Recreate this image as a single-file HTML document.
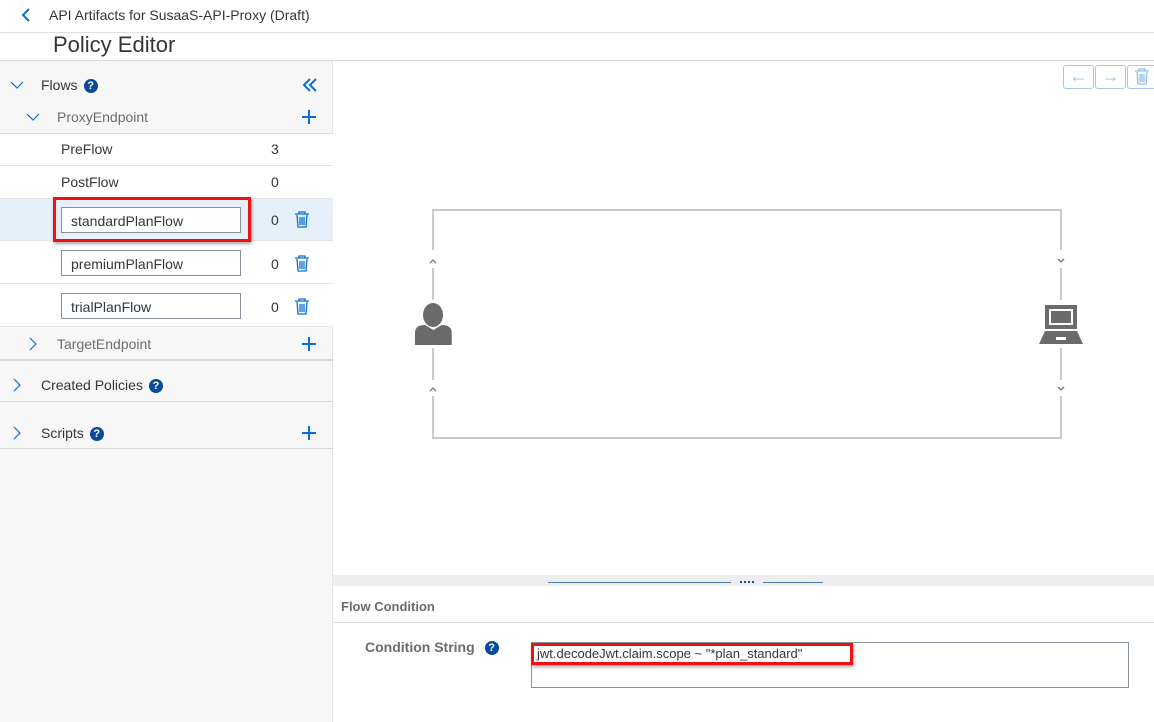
<!DOCTYPE html>
<html><head><meta charset="utf-8"><style>
*{margin:0;padding:0;box-sizing:border-box}
body{width:1154px;height:722px;position:relative;overflow:hidden;background:#fff;font-family:"Liberation Sans",Arial,sans-serif;color:#32363a}
.a{position:absolute}
.t{font-size:14px}
.row{position:absolute;left:0;width:333px;border-bottom:1px solid #e5e5e5}
.inp{position:absolute;left:61px;width:180px;height:26px;border:1px solid #89919a;background:#fff;font-size:14px;padding:5px 9px;color:#32363a}
.q{display:inline-block;width:14px;height:14px;border-radius:50%;background:#0a4a9c;color:#fff;font-size:11px;font-weight:bold;text-align:center;line-height:14px;vertical-align:1px;margin-left:6px}
.plus{position:absolute;left:301px}
</style></head><body>
<div class="a" style="left:0;top:0;width:1154px;height:33px;border-bottom:1px solid #e0e0e0"></div>
<svg class="a" style="left:20px;top:7px" width="12" height="16"><path d="M9 2 L3 8 L9 14" stroke="#0a6ed1" stroke-width="2" fill="none"/></svg>
<div class="a t" style="left:49px;top:7px">API Artifacts for SusaaS-API-Proxy (Draft)</div>
<div class="a" style="left:53px;top:32px;font-size:22px">Policy Editor</div>
<div class="a" style="left:0;top:60px;width:1154px;height:1px;background:#d9d9d9"></div>
<div class="a" style="left:0;top:61px;width:333px;height:661px;background:#f7f7f7;border-right:1px solid #e5e5e5"></div>
<svg width="0" height="0" style="position:absolute"><defs>
<g id="bin"><path d="M1 3 H15 M5 3 V1 H11 V3 M3 4 L4 16 H12 L13 4 M6 6 V14 M8 6 V14 M10 6 V14" stroke="#0a6ed1" stroke-width="1.3" fill="none"/></g>
<g id="pl"><path d="M8 1 V15 M1 8 H15" stroke="#0a6ed1" stroke-width="2" fill="none"/></g>
</defs></svg>
<svg class="a" style="left:10px;top:80px" width="14" height="10"><path d="M1 2 L7 8 L13 2" stroke="#0a6ed1" stroke-width="1.2" fill="none"/></svg>
<div class="a t" style="left:41px;top:77px">Flows<span class="q">?</span></div>
<svg class="a" style="left:302px;top:77px" width="16" height="16"><path d="M8 2 L2 8 L8 14 M14 2 L8 8 L14 14" stroke="#0a6ed1" stroke-width="2" fill="none"/></svg>
<svg class="a" style="left:26px;top:112px" width="14" height="10"><path d="M1 2 L7 8 L13 2" stroke="#0a6ed1" stroke-width="1.2" fill="none"/></svg>
<div class="a t" style="left:57px;top:109px;color:#6a6d70">ProxyEndpoint</div>
<svg class="plus" style="top:109px" width="16" height="16"><use href="#pl"/></svg>
<div class="row" style="top:133px;height:33px;background:#fff;border-top:1px solid #d9d9d9"></div>
<div class="a t" style="left:61px;top:141px">PreFlow</div><div class="a t" style="left:271px;top:141px">3</div>
<div class="row" style="top:166px;height:33px;background:#fff"></div>
<div class="a t" style="left:61px;top:174px">PostFlow</div><div class="a t" style="left:271px;top:174px">0</div>
<div class="row" style="top:199px;height:42px;background:#e5f0fa"></div>
<div class="row" style="top:241px;height:43px;background:#fff"></div>
<div class="row" style="top:284px;height:43px;background:#fff"></div>
<div class="inp" style="top:207px">standardPlanFlow</div>
<div class="a" style="left:53px;top:197px;width:198px;height:45px;border:3px solid #f01010;box-shadow:1px 2px 3px rgba(0,0,0,.35)"></div>
<div class="inp" style="top:250px">premiumPlanFlow</div>
<div class="inp" style="top:293px">trialPlanFlow</div>
<div class="a t" style="left:271px;top:212px">0</div><div class="a t" style="left:271px;top:256px">0</div><div class="a t" style="left:271px;top:299px">0</div>
<svg class="a" style="left:294px;top:211px" width="16" height="17"><use href="#bin"/></svg>
<svg class="a" style="left:294px;top:255px" width="16" height="17"><use href="#bin"/></svg>
<svg class="a" style="left:294px;top:298px" width="16" height="17"><use href="#bin"/></svg>
<svg class="a" style="left:28px;top:337px" width="10" height="14"><path d="M2 1 L8 7 L2 13" stroke="#0a6ed1" stroke-width="1.2" fill="none"/></svg>
<div class="a t" style="left:57px;top:336px;color:#6a6d70">TargetEndpoint</div>
<svg class="plus" style="top:336px" width="16" height="16"><use href="#pl"/></svg>
<div class="a" style="left:0;top:359px;width:333px;height:2px;background:#d9d9d9"></div>
<svg class="a" style="left:12px;top:378px" width="10" height="14"><path d="M2 1 L8 7 L2 13" stroke="#0a6ed1" stroke-width="1.2" fill="none"/></svg>
<div class="a t" style="left:41px;top:377px">Created Policies<span class="q">?</span></div>
<div class="a" style="left:0;top:401px;width:333px;height:1px;background:#d9d9d9"></div>
<svg class="a" style="left:12px;top:426px" width="10" height="14"><path d="M2 1 L8 7 L2 13" stroke="#0a6ed1" stroke-width="1.2" fill="none"/></svg>
<div class="a t" style="left:41px;top:425px">Scripts<span class="q">?</span></div>
<svg class="plus" style="top:425px" width="16" height="16"><use href="#pl"/></svg>
<div class="a" style="left:0;top:448px;width:333px;height:1px;background:#d9d9d9"></div>
<div class="a" style="left:1063px;top:65px;width:31px;height:24px;border:1px solid #a9c5e8;border-radius:3px;color:#9cbde4;font-size:18px;text-align:center;line-height:20px">←</div>
<div class="a" style="left:1095px;top:65px;width:31px;height:24px;border:1px solid #a9c5e8;border-radius:3px;color:#9cbde4;font-size:18px;text-align:center;line-height:20px">→</div>
<div class="a" style="left:1127px;top:65px;width:31px;height:24px;border:1px solid #a9c5e8;border-radius:3px"></div>
<svg class="a" style="left:1134px;top:68px;opacity:.45" width="16" height="17"><use href="#bin"/></svg>
<svg class="a" style="left:400px;top:200px" width="700" height="250">
<g stroke="#aaa" stroke-width="1.2" fill="none">
<path d="M33 50 V10 H661 V50"/><path d="M33 68 V100"/><path d="M661 68 V100"/>
<path d="M33 148 V180"/><path d="M661 148 V180"/>
<path d="M33 196 V238 H661 V196"/>
</g>
<g stroke="#777" stroke-width="1.3" fill="none">
<path d="M30 63 L33 60 L36 63"/><path d="M30 191 L33 188 L36 191"/>
<path d="M658 59 L661 62 L664 59"/><path d="M658 187 L661 190 L664 187"/>
</g>
<g fill="#6b6b6b">
<ellipse cx="33" cy="115" rx="10" ry="12"/>
<path d="M13 145 V133 Q13 125 24 125 L33 130 L42 125 Q53 125 53 133 V145 Z" transform="translate(3,0) scale(.92 1)"/>
<path d="M645 105 H677 V129 H645 Z M649 109 V125 H673 V109 Z"/>
<rect x="651" y="111" width="20" height="12"/>
<path d="M645 131 H677 L683 144 H639 Z"/>
</g>
<rect x="656" y="137" width="10" height="3" fill="#fff"/>
</svg>
<div class="a" style="left:333px;top:575px;width:821px;height:11px;background:#eceef0"></div>
<div class="a" style="left:548px;top:582px;width:183px;height:1px;background:#0a4a9c;opacity:.7"></div>
<div class="a" style="left:763px;top:582px;width:60px;height:1px;background:#0a4a9c;opacity:.7"></div>
<div class="a" style="left:740px;top:581px;width:14px;height:2px;border-top:2px dotted #0a4a9c"></div>
<div class="a" style="left:341px;top:599px;font-size:13px;font-weight:bold;color:#6a6d70">Flow Condition</div>
<div class="a" style="left:333px;top:622px;width:821px;height:1px;background:#d9d9d9"></div>
<div class="a" style="left:365px;top:639px;font-size:14px;font-weight:bold;color:#6a6d70">Condition String<span class="q" style="margin-left:10px">?</span></div>
<div class="a" style="left:531px;top:642px;width:598px;height:46px;border:1px solid #89919a"></div>
<div class="a" style="left:531px;top:643px;width:322px;height:22px;border:3px solid #f01010;box-shadow:1px 2px 3px rgba(0,0,0,.35)"></div>
<div class="a" style="left:537px;top:646px;font-size:13px;color:#32363a">jwt.decodeJwt.claim.scope ~ "*plan_standard"</div>
</body></html>
